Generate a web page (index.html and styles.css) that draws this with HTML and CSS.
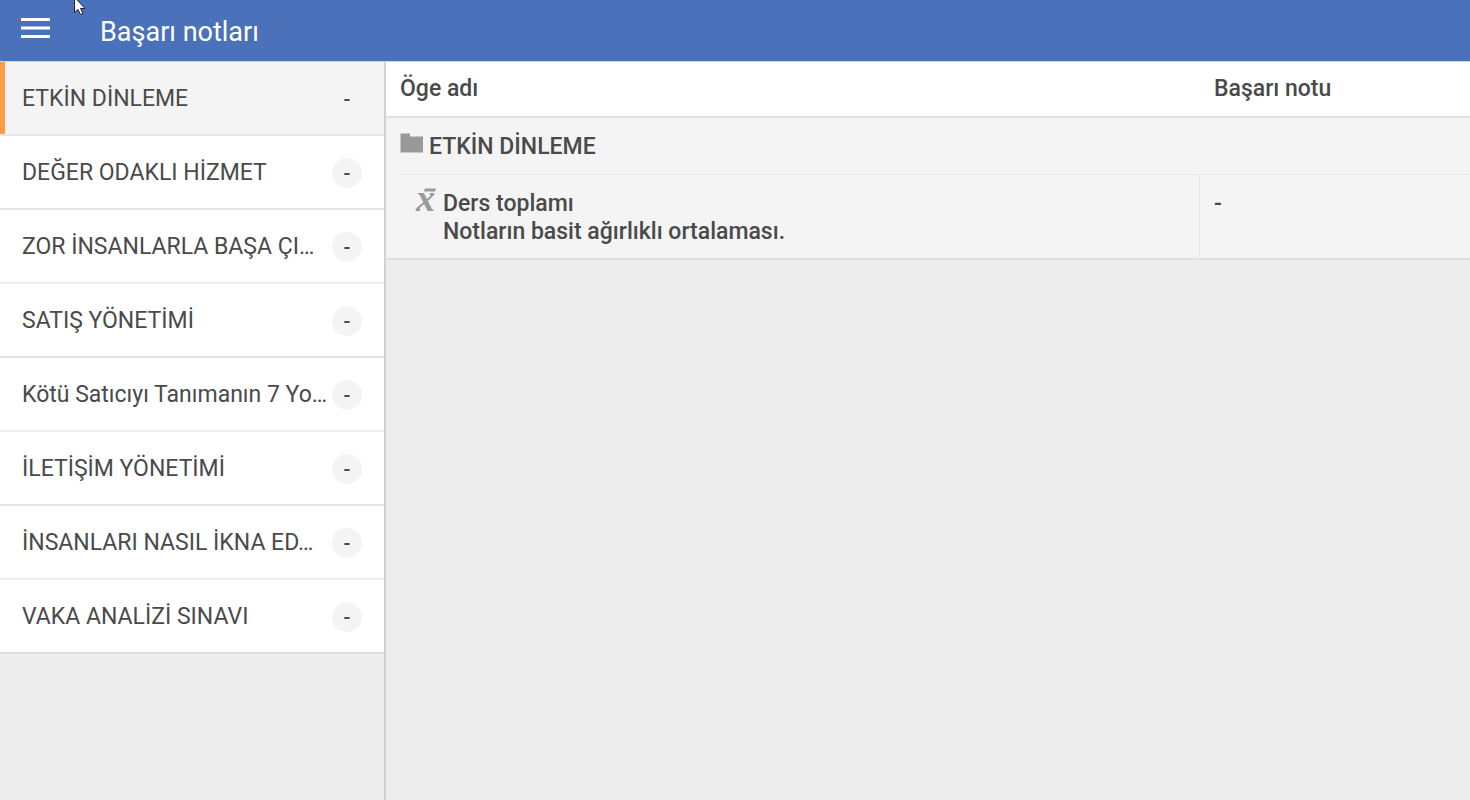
FILE: index.html
```html
<!DOCTYPE html>
<html lang="tr">
<head>
    <meta charset="UTF-8">
    <meta name="viewport" content="width=device-width, initial-scale=1.0">
    <title>Başarı notları</title>
    <link rel="stylesheet" href="styles.css">
</head>
<body>

<header class="topbar">
    <button type="button" class="menu-btn" aria-label="Menü">
        <svg width="30" height="22" viewBox="0 0 30 22"><path d="M1 2.500h29M1 11h29M1 19.500h29" stroke="#fff" stroke-width="3"/></svg>
    </button>
    <h1>Başarı notları</h1>
</header>

<div class="layout">
    <nav class="courses">
        <a href="#" class="course active"><span class="name">ETKİN DİNLEME</span><span class="grade">-</span></a>
        <a href="#" class="course"><span class="name">DEĞER ODAKLI HİZMET</span><span class="grade">-</span></a>
        <a href="#" class="course"><span class="name">ZOR İNSANLARLA BAŞA ÇI…</span><span class="grade">-</span></a>
        <a href="#" class="course"><span class="name">SATIŞ YÖNETİMİ</span><span class="grade">-</span></a>
        <a href="#" class="course"><span class="name">Kötü Satıcıyı Tanımanın 7 Yo…</span><span class="grade">-</span></a>
        <a href="#" class="course"><span class="name">İLETİŞİM YÖNETİMİ</span><span class="grade">-</span></a>
        <a href="#" class="course"><span class="name">İNSANLARI NASIL İKNA ED…</span><span class="grade">-</span></a>
        <a href="#" class="course"><span class="name">VAKA ANALİZİ SINAVI</span><span class="grade">-</span></a>
    </nav>

    <main class="report">
        <table class="grades">
            <thead>
                <tr>
                    <th class="col-item" scope="col">Öge adı</th>
                    <th class="col-grade" scope="col">Başarı notu</th>
                </tr>
            </thead>
            <tbody>
                <tr>
                    <th class="category" colspan="2" scope="colgroup">
                        <div class="category-row">
                            <svg class="icon" width="23" height="20" viewBox="0 0 23 20"><path d="M.5.500H10V3.500H23V19.500H.5z" fill="#999"/></svg>
                            <span>ETKİN DİNLEME</span>
                        </div>
                    </th>
                </tr>
                <tr>
                    <th class="total" scope="row">
                        <div class="total-row">
                            <svg class="icon" width="22" height="24" viewBox="0 0 22 24">
                                <path d="M10-1.500H21L20 1.500H9z" fill="#999"/>
                                <text class="mean" x="1" y="21">x</text>
                            </svg>
                            <span>Ders toplamı<br>Notların basit ağırlıklı ortalaması.</span>
                        </div>
                    </th>
                    <td>-</td>
                </tr>
            </tbody>
        </table>
    </main>
</div>

<svg class="pointer" width="12" height="16" viewBox="0 0 12 16"><path d="M.5-3v15.500l3.500-3 2.500 5 2.500-1-2.500-5H11z" fill="#fff" stroke="#223" stroke-width="1"/></svg>

</body>
</html>
```

FILE: styles.css
```css
* { box-sizing: border-box; }
body { font-family: Roboto, "Liberation Sans", sans-serif; font-size: 23px; line-height: 28px; color: #4a4a4a; background: #ededed; margin: 0; min-height: 100vh; display: flex; flex-direction: column; }

.topbar { display: flex; align-items: center; gap: 50px; height: 62px; padding-left: 20px; background: #4b71ba; border-bottom: 1px solid #c9d4ea; color: #fff; }
.topbar h1 { font-size: 27px; font-weight: 400; line-height: 32px; margin: 0; padding-top: 2px; }
.menu-btn { display: flex; background: none; border: none; padding: 0 0 5px; cursor: pointer; }

.layout { display: flex; flex: 1; }
.courses { width: 386px; flex-shrink: 0; border-right: 2px solid #d2d2d2; }
.course { display: flex; align-items: center; justify-content: space-between; height: 74px; padding: 2px 22px 0; background: #fff; border-bottom: 2px solid #e3e3e3; color: #4a4a4a; text-decoration: none; }
.course:nth-child(odd) { border-bottom-color: #eee; }
.course:last-child { border-bottom-color: #ddd; }
.course.active { background: #f4f4f4; border-bottom-color: #e8e8e8; box-shadow: inset 5px 0 #ff9d42; }
.name { white-space: nowrap; }
.grade { width: 30px; height: 30px; flex-shrink: 0; line-height: 30px; border-radius: 50%; background: #f4f4f4; text-align: center; font-size: 20px; font-weight: 500; }

.report { flex: 1; min-width: 0; }
.grades { width: 100%; border-collapse: separate; border-spacing: 0; background: #f4f4f4; }
.grades th, .grades td { text-align: left; vertical-align: top; font-weight: 500; padding: 15px 14px 12px; }
.grades thead th { background: #fff; padding: 13px 14px; border-bottom: 2px solid #e2e2e2; }
.grades .col-grade { width: 270px; }
.grades tbody .category { padding: 0 0 0 14px; }
.category-row { display: flex; gap: 6px; padding: 15px 0 13px; border-bottom: 1px solid #e8e8e8; }
.total-row { display: flex; gap: 6px; padding-left: 15px; }
.grades .total { border-right: 1px solid #e4e4e4; border-bottom: 2px solid #e0e0e0; }
.grades td { border-bottom: 2px solid #e0e0e0; }
.icon { flex-shrink: 0; overflow: visible; }
.mean { font: italic bold 38px "Liberation Serif", serif; fill: #999; }

.pointer { position: absolute; left: 74px; top: 0; pointer-events: none; }
```
